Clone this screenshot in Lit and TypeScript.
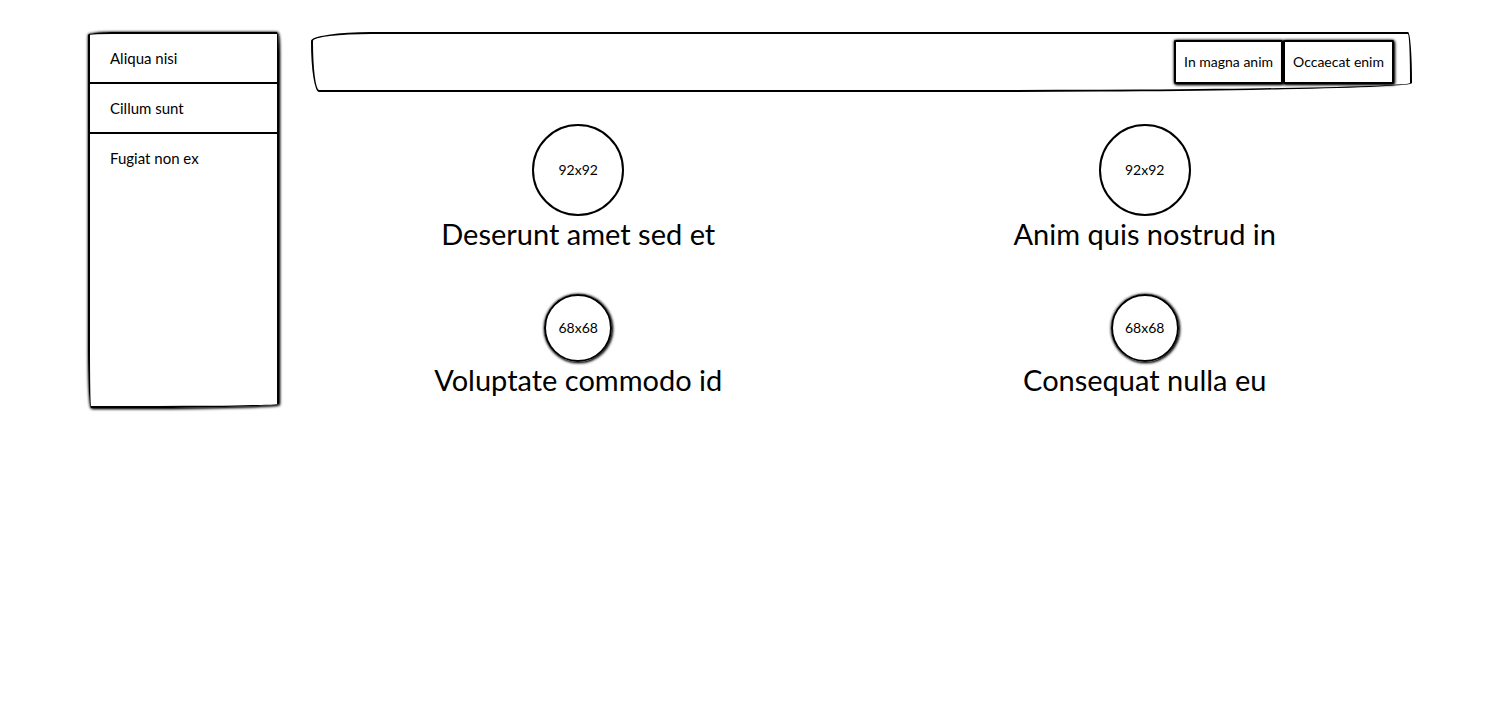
import { LitElement, html, css } from "lit";
import { customElement } from "lit/decorators.js";

interface Tile {
  size: number;
  title: string;
}

@customElement("sketch-avatar-tile")
class SketchAvatarTile extends LitElement {
  static properties = { size: { type: Number }, heading: { type: String } };
  declare size: number;
  declare heading: string;

  static styles = css`
    :host {
      display: flex;
      flex-direction: column;
      align-items: center;
    }
    .circle {
      box-sizing: border-box;
      display: flex;
      align-items: center;
      justify-content: center;
      border: 2px solid #000;
      border-radius: 50%;
      width: 92px;
      height: 92px;
      font-size: 14px;
    }
    .small {
      width: 68px;
      height: 68px;
      box-shadow: 1px 1px 3px #000, 0 0 3px #000;
    }
    .title {
      margin: 0;
      font-size: 29px;
      font-weight: 400;
      line-height: 36px;
      padding-bottom: 10px;
      text-align: center;
    }
  `;

  render() {
    return html`
      <div class="circle ${this.size < 92 ? "small" : ""}">${this.size}x${this.size}</div>
      <h2 class="title">${this.heading}</h2>
    `;
  }
}

@customElement("app-root")
class AppRoot extends LitElement {
  static styles = css`
    :host {
      display: block;
      padding: 32px;
      background: #fff;
      color: #000;
      font-family: Lato, "Liberation Sans", sans-serif;
      font-size: 15px;
      line-height: 24px;
    }
    .page {
      display: grid;
      grid-template-columns: 191px minmax(0, 1fr);
      gap: 32px;
      max-width: 1324px;
      margin: 0 auto;
    }
    .side {
      border: 2px solid #000;
      border-radius: 24px 2px 150px 3px / 3px 20px 4px 60px;
      box-shadow: 1px 1px 3px #000, 0 0 3px #000;
    }
    .list {
      list-style: none;
      margin: 0;
      padding: 0;
    }
    .item + .item {
      border-top: 2px solid #000;
    }
    .link {
      display: block;
      padding: 12px 20px;
      color: inherit;
      text-decoration: none;
    }
    .main {
      display: flex;
      flex-direction: column;
      gap: 32px;
    }
    .bar {
      display: flex;
      justify-content: flex-end;
      border: 2px solid #000;
      border-radius: 60px 4px 440px 8px / 9px 50px 9px 50px;
      padding: 6px 16px;
    }
    .button {
      height: 44px;
      padding: 0 8px;
      background: #fff;
      border: 2px solid #000;
      border-radius: 3px 1px 3px 1px / 1px 3px 1px 3px;
      box-shadow: 1px 1px 3px #000, 0 0 3px #000;
      color: inherit;
      font: inherit;
      font-size: 14px;
    }
    .tiles {
      display: grid;
      grid-template-columns: 1fr 1fr;
      gap: 32px;
    }
  `;

  private links = ["Aliqua nisi", "Cillum sunt", "Fugiat non ex"];
  private actions = ["In magna anim", "Occaecat enim"];
  private tiles: Tile[] = [
    { size: 92, title: "Deserunt amet sed et" },
    { size: 92, title: "Anim quis nostrud in" },
    { size: 68, title: "Voluptate commodo id" },
    { size: 68, title: "Consequat nulla eu" },
  ];

  render() {
    return html`
      <div class="page">
        <nav class="side">
          <ul class="list">
            ${this.links.map((t) => html`<li class="item"><a class="link" href="#">${t}</a></li>`)}
          </ul>
        </nav>
        <main class="main">
          <header class="bar">
            ${this.actions.map((t) => html`<button class="button" type="button">${t}</button>`)}
          </header>
          <section class="tiles">
            ${this.tiles.map(
              (t) => html`<sketch-avatar-tile .size=${t.size} .heading=${t.title}></sketch-avatar-tile>`
            )}
          </section>
        </main>
      </div>
    `;
  }
}
